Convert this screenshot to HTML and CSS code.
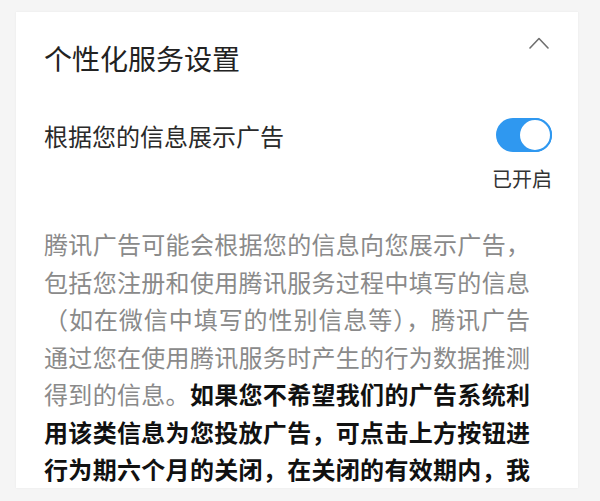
FILE: index.html
```html
<!DOCTYPE html>
<html lang="zh-CN">
<head>
<meta charset="utf-8">
<title>个性化服务设置</title>
<link rel="stylesheet" href="styles.css">
</head>
<body>
<div class="card">
  <div class="header">
    <h1 class="title">个性化服务设置</h1>
    <svg class="chevron" width="20" height="12" viewBox="0 0 20 12" aria-hidden="true">
      <polyline points="1,11 10,1.5 19,11" fill="none" stroke="#6f6f6f" stroke-width="1.6" stroke-linecap="round" stroke-linejoin="round"/>
    </svg>
  </div>
  <div class="setting-row">
    <div class="label">根据您的信息展示广告</div>
    <div class="control">
      <div class="toggle"><span class="knob"></span></div>
      <div class="state">已开启</div>
    </div>
  </div>
  <p class="desc">腾讯广告可能会根据您的信息向您展示广告，包括您注册和使用腾讯服务过程中填写的信息（如在微信中填写的性别信息等），腾讯广告通过您在使用腾讯服务时产生的行为数据推测得到的信息。<strong class="strong">如果您不希望我们的广告系统利用该类信息为您投放广告，可点击上方按钮进行为期六个月的关闭，在关闭的有效期内，我</strong></p>
</div>
</body>
</html>
```
FILE: styles.css
```css
html, body {
  margin: 0;
  padding: 0;
  background: #f5f5f5;
}

body {
  font-family: "Noto Sans CJK SC", "Noto Sans", sans-serif;
  width: 600px;
  height: 501px;
  overflow: hidden;
}

.card {
  box-sizing: border-box;
  margin: 12px 22px 0 16px;
  height: 476px;
  background: #ffffff;
  box-shadow: 0 0 2px rgba(0, 0, 0, 0.06);
  padding: 26px 26px 0 28px;
  overflow: hidden;
}

.header {
  display: flex;
  justify-content: space-between;
  align-items: flex-start;
}

.title {
  margin: 0;
  font-size: 28px;
  line-height: 40px;
  font-weight: normal;
  color: #222222;
}

.chevron {
  display: block;
  margin: -1px 3px 0 0;
}

.setting-row {
  display: flex;
  justify-content: space-between;
  align-items: flex-start;
  margin-top: 40px;
}

.label {
  font-size: 24px;
  line-height: 34px;
  margin-top: 1px;
  color: #2a2a2a;
}

.control {
  display: flex;
  flex-direction: column;
  align-items: flex-end;
}

.toggle {
  display: flex;
  justify-content: flex-end;
  width: 56px;
  height: 34px;
  border-radius: 17px;
  background: #2f98f0;
}

.knob {
  box-sizing: border-box;
  width: 34px;
  height: 34px;
  border-radius: 50%;
  background: #ffffff;
  border: 2px solid #2f98f0;
}

.state {
  margin-top: 13px;
  font-size: 20px;
  line-height: 28px;
  color: #333333;
}

.desc {
  margin: 32px 22px 0 0;
  font-size: 24px;
  line-height: 37.5px;
  color: #8a8a8a;
  text-align: justify;
  text-align-last: justify;
}

.strong {
  font-weight: bold;
  color: #111111;
}
```
